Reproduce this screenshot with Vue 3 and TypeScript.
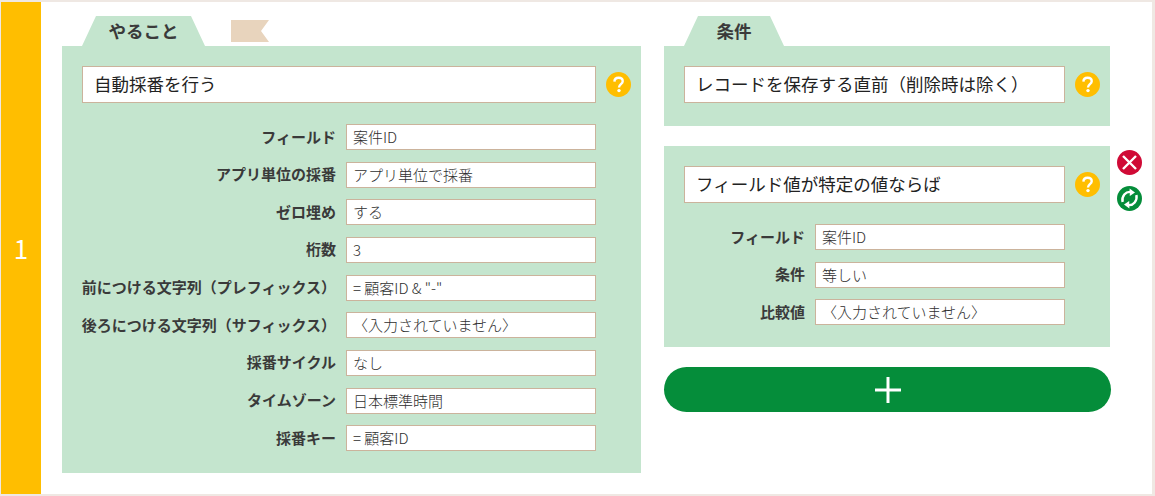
<script setup lang="ts">
interface Row { label: string; value: string }
const todoRows: Row[] = [
  { label: 'フィールド', value: '案件ID' },
  { label: 'アプリ単位の採番', value: 'アプリ単位で採番' },
  { label: 'ゼロ埋め', value: 'する' },
  { label: '桁数', value: '3' },
  { label: '前につける文字列（プレフィックス）', value: '= 顧客ID & "-"' },
  { label: '後ろにつける文字列（サフィックス）', value: '〈入力されていません〉' },
  { label: '採番サイクル', value: 'なし' },
  { label: 'タイムゾーン', value: '日本標準時間' },
  { label: '採番キー', value: '= 顧客ID' },
]
const condRows: Row[] = [
  { label: 'フィールド', value: '案件ID' },
  { label: '条件', value: '等しい' },
  { label: '比較値', value: '〈入力されていません〉' },
]
</script>

<template>
  <div class="frame">
    <div class="index">1</div>
    <div class="content">
      <section class="col col-left">
        <div class="tabs">
          <div class="tab tab-todo">やること</div>
          <svg class="flag" width="38" height="22" viewBox="0 0 38 22"><path d="M0 0H38L30 11L38 22H0Z" fill="#e8d4bd" /></svg>
        </div>
        <div class="panel panel-todo">
          <div class="head">
            <div class="select">自動採番を行う</div>
            <svg class="help" width="25" height="25" viewBox="0 0 25 25"><circle cx="12.5" cy="12.5" r="12.5" fill="#ffbe00" /><path d="M8.4 9.6C8.5 7.2 10.2 5.8 12.6 5.8C15 5.8 16.7 7.2 16.7 9.2C16.7 12 13 12.2 13 15.4" fill="none" stroke="#fff" stroke-width="2.4" /><circle cx="13" cy="18.6" r="1.7" fill="#fff" /></svg>
          </div>
          <div class="rows rows-todo">
            <div v-for="r in todoRows" :key="r.label" class="row">
              <span class="label">{{ r.label }}</span>
              <span class="value">{{ r.value }}</span>
            </div>
          </div>
        </div>
      </section>
      <section class="col col-right">
        <div class="tabs">
          <div class="tab tab-cond">条件</div>
        </div>
        <div class="panel panel-trigger">
          <div class="head">
            <div class="select">レコードを保存する直前（削除時は除く）</div>
            <svg class="help" width="25" height="25" viewBox="0 0 25 25"><circle cx="12.5" cy="12.5" r="12.5" fill="#ffbe00" /><path d="M8.4 9.6C8.5 7.2 10.2 5.8 12.6 5.8C15 5.8 16.7 7.2 16.7 9.2C16.7 12 13 12.2 13 15.4" fill="none" stroke="#fff" stroke-width="2.4" /><circle cx="13" cy="18.6" r="1.7" fill="#fff" /></svg>
          </div>
        </div>
        <div class="panel panel-cond">
          <div class="head">
            <div class="select">フィールド値が特定の値ならば</div>
            <svg class="help" width="25" height="25" viewBox="0 0 25 25"><circle cx="12.5" cy="12.5" r="12.5" fill="#ffbe00" /><path d="M8.4 9.6C8.5 7.2 10.2 5.8 12.6 5.8C15 5.8 16.7 7.2 16.7 9.2C16.7 12 13 12.2 13 15.4" fill="none" stroke="#fff" stroke-width="2.4" /><circle cx="13" cy="18.6" r="1.7" fill="#fff" /></svg>
          </div>
          <div class="rows rows-cond">
            <div v-for="r in condRows" :key="r.label" class="row">
              <span class="label">{{ r.label }}</span>
              <span class="value">{{ r.value }}</span>
            </div>
          </div>
          <div class="side">
            <svg width="25" height="25" viewBox="0 0 25 25"><circle cx="12.5" cy="12.5" r="12.5" fill="#d00a36" /><path d="M6 6L19 19M19 6L6 19" stroke="#fff" stroke-width="2.4" fill="none" /></svg>
            <svg width="25" height="25" viewBox="0 0 25 25"><circle cx="12.5" cy="12.5" r="12.5" fill="#058d3a" /><path d="M5.6 16C4.4 10.4 8.6 5.2 14 6" fill="none" stroke="#fff" stroke-width="2.4" /><path d="M12.6 2.4L18 6.4L12.8 10Z" fill="#fff" /><path d="M19.4 9C20.6 14.6 16.4 19.8 11 19" fill="none" stroke="#fff" stroke-width="2.4" /><path d="M12.4 22.6L7 18.6L12.2 15Z" fill="#fff" /></svg>
          </div>
        </div>
        <button class="add" type="button">
          <svg width="26" height="26" viewBox="0 0 26 26"><path d="M13 0V26M0 13H26" stroke="#fff" stroke-width="3" fill="none" /></svg>
        </button>
      </section>
    </div>
  </div>
</template>

<style>
html, body { margin: 0; background: #fff; }
</style>

<style scoped>
.frame {
  box-sizing: border-box;
  width: 1155px;
  height: 496px;
  display: flex;
  border-style: solid;
  border-color: #efe8e3;
  border-width: 2px 3px 2px 1px;
  background: #fff;
  font-family: "Noto Sans CJK JP", "Noto Sans", sans-serif;
  color: #3a3a3a;
}
.index {
  width: 40px;
  flex: none;
  background: #ffbe00;
  color: #fff;
  font-size: 26px;
  padding-bottom: 2px;
  box-sizing: border-box;
  display: flex;
  align-items: center;
  justify-content: center;
}
.content {
  display: flex;
  gap: 23px;
  padding: 14px 0 0 21px;
}
.col { display: flex; flex-direction: column; }
.col-left { width: 579px; }
.col-right { width: 447px; }
.tabs { height: 30px; display: flex; align-items: flex-start; }
.tab {
  height: 30px;
  background: #c4e5ce;
  font-size: 17.5px;
  font-weight: 700;
  line-height: 30px;
  text-align: center;
  box-sizing: border-box;
  clip-path: polygon(14px 0, calc(100% - 14px) 0, 100% 100%, 0 100%);
}
.tab-todo { width: 123px; margin-left: 20px; }
.tab-cond { width: 100px; margin-left: 20px; }
.flag { margin: 4px 0 0 26px; }
.panel {
  background: #c4e5ce;
  box-sizing: border-box;
  padding: 20px 10px 0 20px;
  position: relative;
}
.panel-todo { height: 427px; }
.panel-trigger { width: 446px; height: 80px; }
.panel-cond { width: 446px; height: 201px; margin-top: 20px; }
.head { display: flex; align-items: center; gap: 10px; }
.select {
  box-sizing: border-box;
  flex: 1;
  height: 37px;
  background: #fff;
  border: 1px solid #cbb39c;
  font-size: 17.5px;
  line-height: 33px;
  padding-left: 11px;
  white-space: nowrap;
  color: #222;
}
.help { flex: none; }
.rows { display: flex; flex-direction: column; gap: 11.67px; }
.rows-todo { margin-top: 21px; width: 514px; }
.rows-cond { margin-top: 21px; width: 381px; }
.row { display: flex; justify-content: flex-end; align-items: center; gap: 10px; }
.label { font-size: 15px; font-weight: 700; white-space: nowrap; line-height: 24px; margin-top: -1px; }
.value {
  box-sizing: border-box;
  width: 250px;
  height: 26px;
  flex: none;
  background: #fff;
  border: 1px solid #cbb39c;
  font-size: 15px;
  font-weight: 300;
  color: #2e2e2e;
  line-height: 24px;
  padding-left: 6px;
  white-space: nowrap;
}
.side {
  position: absolute;
  left: 453px;
  top: 4px;
  display: flex;
  flex-direction: column;
  gap: 11px;
}
.side svg { display: block; }
.add {
  width: 447px;
  height: 45px;
  margin-top: 20px;
  border: none;
  border-radius: 23px;
  background: #058d3a;
  display: flex;
  align-items: center;
  justify-content: center;
  padding: 0;
}
.add svg { display: block; }
</style>
